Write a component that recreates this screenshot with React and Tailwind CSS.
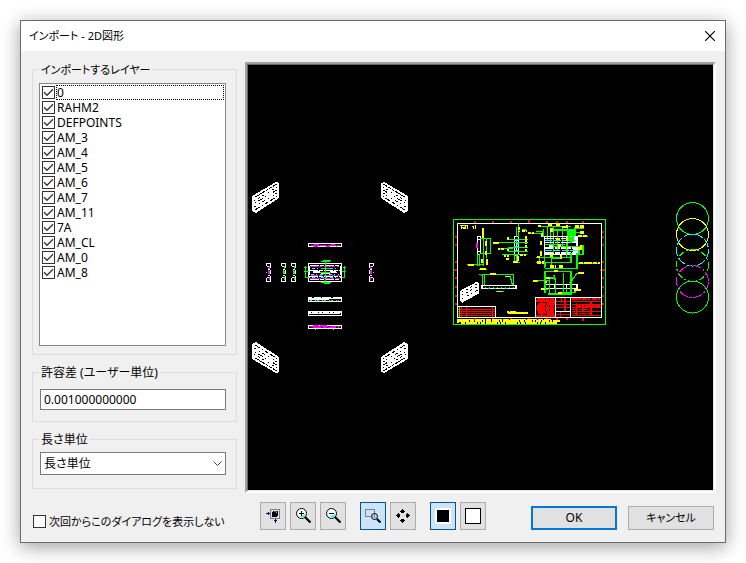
import React from "react";

const LAYERS = [
  "0", "RAHM2", "DEFPOINTS", "AM_3", "AM_4", "AM_5", "AM_6",
  "AM_7", "AM_11", "7A", "AM_CL", "AM_0", "AM_8",
];

const GREEN = "#00ff00";
const YELLOW = "#ffff00";
const CYAN = "#00ffff";
const MAGENTA = "#ff00ff";
const RED = "#ff0000";

function CheckBox({ id, defaultChecked }) {
  return (
    <span className="grid h-[13px] w-[13px] shrink-0">
      <input
        id={id}
        type="checkbox"
        defaultChecked={defaultChecked}
        className="peer col-start-1 row-start-1 h-[13px] w-[13px] appearance-none border border-[#333] bg-white"
      />
      <svg
        viewBox="0 0 13 13"
        className="pointer-events-none col-start-1 row-start-1 h-[13px] w-[13px] opacity-0 peer-checked:opacity-100"
      >
        <path d="M2 6.3 L5 9.3 L11 3.3" fill="none" stroke="#333" strokeWidth="1.3" />
      </svg>
    </span>
  );
}

function Group({ title, className = "", legendClassName = "", children }) {
  return (
    <fieldset className={"min-w-0 border border-[#dcdcdc] px-[6px] " + className}>
      <legend className={"px-[2px] pt-px leading-[14px] " + legendClassName}>{title}</legend>
      {children}
    </fieldset>
  );
}

function ToolButton({ label, active, children }) {
  return (
    <button
      type="button"
      aria-label={label}
      aria-pressed={!!active}
      className={
        "flex h-7 w-[26px] items-center justify-center border " +
        (active ? "border-[#005499] bg-[#cce4f7]" : "border-[#adadad] bg-[#e1e1e1]")
      }
    >
      <svg viewBox="0 0 16 16" className="h-4 w-4 overflow-visible">
        {children}
      </svg>
    </button>
  );
}

function Magnifier({ plus }) {
  return (
    <>
      <circle cx="6.5" cy="5.5" r="5" fill="#fff" stroke="#000" />
      <path d="M5.500 9 L7.500 8 M8 8.500 L10 6.500" stroke={CYAN} strokeWidth="1.6" />
      <path d="M4 5h5v1h-5z" />
      {plus && <path d="M6 3h1v5h-1z" />}
      <path d="M10 9 L15.5 14.5" stroke="#000" strokeWidth="2.2" />
    </>
  );
}

/* Isometric view of the part, slanting up to the right. */
function IsoPart({ transform }) {
  return (
    <g transform={transform}>
      <path d="M0 14 L24 0 L27 1 V16 L4 31 L0 29 Z" fill="#fff" />
      <g stroke="#000" fill="none" shapeRendering="crispEdges">
        <path d="M3 15 L25 2" strokeDasharray="4 1 7 1 2 1" />
        <path d="M2 19 L25 5" strokeDasharray="1 4 2 3 1 5" />
        <path d="M3 21 L25 8" strokeDasharray="1 3 5 2 2 4" />
        <path d="M2 25 L25 11" strokeDasharray="2 4 1 2 4 3" />
        <path d="M3 28 L26 14" strokeDasharray="6 2 1 3 3 2" />
      </g>
    </g>
  );
}

/* Narrow side view of the part, 4 by 19. */
function SidePart({ x, accent, flip }) {
  return (
    <g transform={flip ? `translate(${x + 5} 263) scale(-1 1)` : `translate(${x} 263)`}>
      <path d="M0 .5h5 M4.500 0v5 M4.500 7v4 M4.500 13v6 M0 18.500h5 M.5 0v3 M.5 15v4 M1 3.500h2 M1 14.500h2 M2 6.500h2 M2 12.500h2" stroke="#fff" fill="none" />
      <path d="M3.500 3v3 M2.500 7v4 M3.500 8v3 M3.500 14v3" stroke={accent} />
      {accent === MAGENTA && <path d="M0 9.500h1 M2 5.500h1" stroke={CYAN} />}
    </g>
  );
}

function Views() {
  return (
    <g fill="none" shapeRendering="crispEdges">
      <IsoPart transform="translate(252 182)" />
      <IsoPart transform="translate(408 182) scale(-1 1)" />
      <IsoPart transform="translate(252 373) scale(1 -1)" />
      <IsoPart transform="translate(408 373) scale(-1 -1)" />

      <SidePart x={266} accent={MAGENTA} />
      <SidePart x={281} accent={GREEN} />
      <SidePart x={291} accent={GREEN} />
      <SidePart x={369} accent={MAGENTA} flip />

      <rect x="308.5" y="243.5" width="33" height="3" stroke="#fff" />
      <path d="M311 245.5h29 M314 244.5h5 M331 244.5h4" stroke={MAGENTA} strokeDasharray="5 1 2 1 7 1" />
      <path d="M314 246.5h22" stroke={MAGENTA} strokeDasharray="4 8" />
      <path d="M313 246.5h25" stroke={CYAN} strokeDasharray="1 22" />

      <rect x="308.5" y="263.5" width="33" height="18" stroke="#fff" />
      <path d="M310 265.5h30 M309 270.5h32 M309 276.5h32 M310 279.5h30 M309.500 266v12 M340.500 266v12" stroke="#fff" strokeDasharray="9 1 4 1" />
      <path d="M311 266.5h28 M311 275.5h28 M310 278.5h30" stroke={MAGENTA} strokeDasharray="7 1 3 2" />
      <path d="M312 268.5h26 M311 274.5h28 M312 277.5h26" stroke={CYAN} strokeDasharray="3 2 1 3" />
      <path d="M313 271.5h7 M330 271.5h6 M313 272.5h8 M330 272.5h7 M321 273.5h9" stroke="#fff" />
      <path d="M321 268.5h9 M320 272.5h11 M325.5 261v22 M321 261.5h9 M323 260.5h8 M321 282.5h10 M324 283.5h6" stroke={GREEN} />
      <path d="M305.5 266v12 M304 267.5h3 M304 271.5h5 M305 277.5h4 M344.5 266v12 M343 267.5h3 M342 271.5h4 M342 277.5h3" stroke={GREEN} />

      <path d="M308 297.5h34 M309 298.5h32 M309 299.5h20 M308 301.5h34 M308.5 297v5 M341.5 297v5" stroke="#fff" />
      <path d="M312 297.5h28" stroke="#000" strokeDasharray="2 7 1 9" />
      <path d="M310 300.5h29" stroke={GREEN} strokeDasharray="2 3 1 1" />

      <path d="M308 311.5h34 M309 312.5h32 M309 313.5h31 M308 315.5h34 M308.5 311v5 M341.5 311v5" stroke="#fff" />
      <path d="M311 312.5h28" stroke="#000" strokeDasharray="1 6 1 3" />

      <rect x="308.5" y="325.5" width="33" height="3" stroke="#fff" />
      <path d="M310 326.5h30 M313 325.5h14" stroke={MAGENTA} strokeDasharray="6 1 11 2" />
      <path d="M313 327.5h26" stroke={MAGENTA} strokeDasharray="8 2 4 1" />
      <path d="M315 329.5h20" stroke={CYAN} strokeDasharray="1 17" />
    </g>
  );
}

/* The drawing sheet, on a grid three times finer than the view. */
function Sheet() {
  return (
    <g transform="translate(445 210) scale(0.33333)" fill="none" strokeWidth="3.8" shapeRendering="crispEdges">
      <rect x="25.5" y="28.5" width="456" height="315" stroke={GREEN} strokeWidth="3" />
      <path
        d="M91 32v7 M145 33v6 M199 32v7 M253 30v12 M307 33v6 M337 33v6 M367 32v7 M415 33v6 M91 324v8 M145 324v6 M199 324v8 M253 324v12 M307 324v6 M337 324v8 M367 324v6 M415 324v8 M30 82h8 M31 106h6 M29 156h8 M28 181h12 M31 205h6 M31 232h6 M30 258h8 M31 282h6 M471 66h7 M471 82h7 M471 106h6 M471 156h7 M466 181h14 M471 205h7 M471 232h7 M471 258h7 M471 282h7"
        stroke={RED}
        strokeWidth="5"
      />
      <rect x="37.5" y="40.5" width="432" height="282" stroke="#fff" strokeWidth="3" />

      {/* Title note */}
      <path d="M45 46h24 M48 52h14 M49 49v9 M62 49v9 M68 46v10 M80 49h8 M85 49v9 M91 46v12 M54 55h10" stroke={YELLOW} />

      {/* Left section */}
      <path d="M97 79.500h9 M97 79v54 M97 133h9 M106 79v54 M100 88h6 M100 124h6" stroke="#fff" />
      <path d="M97 98v17 M94 106h6" stroke={MAGENTA} strokeWidth="6" />
      <path d="M115 55v112 M106 85h32 M106 130h32 M136 85v46 M124 85v60 M97 133v34 M103 133v34 M66 164h50 M103 179h24" stroke={GREEN} />
      <path d="M115 53v30 M124 92v16 M124 122v14 M112 148v12 M126 148v16 M68 164h18 M104 177h20" stroke={YELLOW} strokeWidth="6" />

      {/* Middle section */}
      <path d="M208 80h12 M208 80v56 M220 80v56 M208 136h12 M208 90h12 M208 124h12 M214 96v24" stroke="#fff" />
      <path d="M208 92h6v10h8 M206 110h14 M210 122h10" stroke={CYAN} />
      <path d="M190 88h58 M190 97h58 M145 98h60 M160 115h45 M190 124h58 M190 112h58 M170 134h75 M208 133v24 M214 50v30 M220 40v40 M214 133v24 M204 157h20 M232 60h12 M250 70h44v-6h-22" stroke={GREEN} />
      <path d="M190 82v10 M144 98h18 M158 116h18 M190 124v-8 M244 78v24 M244 106v18 M222 52v14 M176 138h16 M184 146h12 M220 138v14 M232 62h14 M250 70h16 M204 156h16 M226 134h18" stroke={YELLOW} strokeWidth="6" strokeDasharray="8 2" />

      {/* Right plan */}
      <path d="M298 133v42 M282 50h96 M296 56v24 M308 50v40 M316 58v48 M325 50v70 M338 62h40 M338 62v60 M352 50v60 M368 50v78 M378 56v34 M390 50v30 M316 60h60 M300 142h80" stroke={GREEN} />
      <rect x="298" y="79" width="98" height="54" stroke="#fff" />
      <path d="M300 86h94 M300 98h94 M300 114h94 M300 129h94" stroke="#fff" strokeWidth="5" strokeDasharray="28 3 14 4" />
      <path d="M312 106h14 M388 80v18 M388 116v16" stroke="#fff" strokeWidth="8" />
      <path d="M300 92h94 M298 122h98" stroke={CYAN} strokeDasharray="22 4" />
      <path
        d="M300 104h60 M326 110h88 M338 62v60 M325 100v30 M378 80v20 M364 100v42 M272 142h110 M272 158h106 M378 130v28 M396 130v34 M396 160h62 M300 175h96v-42 M320 166v-20h30 M402 110v24h12v-28 M390 54h28 M388 68h26 M398 80h32 M284 142v18 M300 158v14 M372 56v34 M384 56v40"
        stroke={GREEN}
      />
      <path
        d="M284 44v8 M308 46h14 M334 44h12 M352 52h14 M366 44v10 M390 50h28 M404 68h14 M400 78h30 M320 54v12 M292 70v14 M334 88h12 M276 142h10 M320 132v10 M348 134v12 M276 158h22 M316 170h16 M342 170h12 M402 160h64 M408 104v10 M398 116h14 M366 80v12 M344 102v10 M288 122v16 M288 92v14"
        stroke={YELLOW}
        strokeWidth="7"
        strokeDasharray="12 2"
      />

      {/* Lower elevation */}
      <path d="M112 194h94 M112 194v32 M118 194v32 M206 194v32 M182 200h14l6 24 M104 192l8 6 M154 245h22" stroke={GREEN} />
      <path d="M134 193h18 M180 200h16 M156 245h16" stroke={YELLOW} strokeWidth="5" />
      <path d="M111 227h102v8h-102z" stroke="#fff" />
      <path d="M120 232h86" stroke={GREEN} strokeDasharray="4 8" />
      <path d="M130 236h62" stroke={CYAN} strokeDasharray="5 12" />

      {/* Right elevation */}
      <path d="M298 223h98v12h-98z M330 223v12 M364 223v12" stroke="#fff" />
      <path d="M300 184h78 M300 184v64 M378 184v64 M314 204v50 M332 204v48 M356 190v64 M300 204h26 M266 212h46 M326 194l6 20 M342 248h48v-12 M308 252h74 M396 190l-22 30 M396 190h22 M288 238h22 M364 235v20" stroke={GREEN} />
      <path d="M326 182h14 M264 212h14 M398 190h20 M304 212v6 M288 238h12 M388 240h20 M340 248h12 M302 204h12" stroke={YELLOW} strokeWidth="6" />

      {/* Isometric view */}
      <path d="M46 242 L94 216 L102 218 V250 L52 278 L46 274 Z" fill="#fff" />
      <path d="M50 247 L96 222 M50 256 L98 230 M52 266 L98 240" stroke="#000" strokeWidth="3" strokeDasharray="4 11 8 7" />

      {/* Revision table */}
      <path d="M40 298h110 M40 304h110 M40 310h110 M40 316h110 M49 292v28 M64 292v28 M142 292v28" stroke={RED} strokeWidth="3" />
      <path d="M40 290h112v32" stroke="#fff" />
      <path d="M43 292v28" stroke={GREEN} />
      <path d="M188 302v8 M188 310h60 M196 306h16 M222 308h26" stroke={YELLOW} strokeWidth="6" />

      {/* Title block */}
      <path d="M276 266h50 M280 282h50 M276 290h52 M276 300h52 M280 308h48 M306 274h24 M306 316h24" stroke={RED} strokeWidth="8" strokeDasharray="24 2 11 2" />
      <path d="M273 274h58 M273 296h58 M273 318h58 M292 264v56 M310 264v56 M324 264v56" stroke={RED} strokeWidth="5" />
      <path d="M334 274h40 M334 284h42 M334 292h42 M334 314h42 M350 264v14 M360 264v40 M346 306v14" stroke={RED} />
      <path d="M380 274h88 M380 284h88 M380 292h88 M380 304h88 M380 316h88 M394 280v38 M414 284v20 M438 276v40" stroke={RED} />
      <path d="M382 267h84 M392 288h74 M382 298h50 M382 310h60" stroke={RED} strokeDasharray="16 3 6 4" />
      <path d="M271 322v-60h198 M332 262v60 M377 262v60 M332 304h45" stroke="#fff" />

      {/* Notes */}
      <path d="M38 329h280" stroke={YELLOW} strokeDasharray="30 2 17 3" />
      <path d="M40 333h306" stroke={YELLOW} strokeWidth="6" strokeDasharray="22 2 7 3 14 2" />
      <path d="M48 339h290" stroke={YELLOW} strokeWidth="5" strokeDasharray="12 3 34 3 6 2" />
      <path d="M39 328v12" stroke={YELLOW} strokeWidth="6" />
    </g>
  );
}

function Circles() {
  return (
    <g fill="none" shapeRendering="crispEdges">
      <circle cx="692.5" cy="218.500" r="16" stroke={GREEN} />
      <circle cx="692.5" cy="265.500" r="16" stroke={GREEN} strokeDasharray="6 2 2 2" />
      <circle cx="692.5" cy="234.500" r="16" stroke={YELLOW} />
      <circle cx="692.5" cy="250" r="16" stroke={CYAN} strokeDasharray="9 2" />
      <circle cx="692.5" cy="281.500" r="16" stroke={MAGENTA} strokeDasharray="9 2 2 2" />
      <circle cx="692.5" cy="297" r="16" stroke={GREEN} />
    </g>
  );
}

export default function App() {
  return (
    <div className="flex min-h-screen bg-white p-5 font-['Noto_Sans','Noto_Sans_CJK_JP',sans-serif] text-[12px] text-black [font-feature-settings:'palt']">
      <div
        role="dialog"
        aria-labelledby="dialog-title"
        className="flex min-w-0 flex-1 flex-col border border-[#6b6b6b] bg-[#f0f0f0] shadow-[0_4px_18px_rgba(0,0,0,0.38)]"
      >
        <header className="flex h-[30px] items-center justify-between bg-white pr-[10px] pl-2">
          <h1 id="dialog-title" className="text-[11px]">インポート - 2D図形</h1>
          <button type="button" aria-label="閉じる">
            <svg viewBox="0 0 10 10" className="h-[10px] w-[10px]">
              <path d="M0 0 L10 10 M10 0 L0 10" stroke="#000" strokeWidth="1.2" />
            </svg>
          </button>
        </header>

        <div className="flex flex-1 flex-col pt-[11px] pr-[9px] pb-3 pl-[11px]">
          <div className="flex flex-1 gap-2">
            <div className="flex w-[205px] shrink-0 flex-col gap-[10px] pb-1">
              <Group title="インポートするレイヤー" className="flex flex-1 flex-col pb-2" legendClassName="text-[11px]">
                <ul className="mt-[6px] mr-1 flex-1 border border-[#828790] bg-white p-[1px] pl-[2px]">
                  {LAYERS.map((name, i) => (
                    <li key={name} className="flex h-[15px] items-center">
                      <CheckBox id={`layer-${name}`} defaultChecked />
                      <label
                        htmlFor={`layer-${name}`}
                        className={
                          "ml-px flex-1 border leading-[13px] " +
                          (i === 0 ? "border-dotted border-black" : "border-transparent")
                        }
                      >
                        {name}
                      </label>
                    </li>
                  ))}
                </ul>
              </Group>

              <Group title="許容差 (ユーザー単位)" className="h-[57px]">
                <input
                  type="text"
                  aria-label="許容差 (ユーザー単位)"
                  defaultValue="0.001000000000"
                  className="mt-[9px] ml-[1px] block h-[21px] w-[186px] border border-[#7a7a7a] bg-white px-[3px]"
                />
              </Group>

              <Group title="長さ単位" className="h-[57px]">
                <div className="mt-[5px] ml-[1px] grid w-[186px] items-center">
                  <select
                    aria-label="長さ単位"
                    className="col-start-1 row-start-1 h-[23px] w-full appearance-none border border-[#7a7a7a] bg-white px-[3px]"
                  >
                    <option>長さ単位</option>
                  </select>
                  <svg viewBox="0 0 9 5" className="pointer-events-none col-start-1 row-start-1 mr-1 h-[5px] w-[9px] justify-self-end">
                    <path d="M.5 .5 L4.500 4.500 L8.500 .5" fill="none" stroke="#444" />
                  </svg>
                </div>
              </Group>
            </div>

            <div className="flex min-w-0 flex-1 border-t-2 border-r-2 border-b-2 border-l-2 border-t-[#a0a0a0] border-r-white border-b-white border-l-[#a0a0a0]">
              <div className="flex min-w-0 flex-1 border border-t-[#696969] border-r-[#e3e3e3] border-b-[#e3e3e3] border-l-[#696969] bg-black">
                <svg viewBox="248 65 465 425" className="h-0 min-h-full w-full" role="img" aria-label="プレビュー">
                  <Views />
                  <Sheet />
                  <Circles />
                </svg>
              </div>
            </div>
          </div>

          <footer className="flex items-end gap-2 pt-[9px]">
            <div className="flex w-[205px] shrink-0 items-center gap-[3px] pl-[1px]">
              <CheckBox id="hide-dialog" />
              <label htmlFor="hide-dialog" className="text-[11px] leading-[17px] whitespace-nowrap">
                次回からこのダイアログを表示しない
              </label>
            </div>

            <div className="flex gap-[14px] pl-[15px]">
              <div className="flex gap-1">
                <ToolButton label="全体表示">
                  <g shapeRendering="crispEdges">
                    <rect x="5.5" y="1.5" width="9" height="9" fill="#e1e1e1" stroke="#808080" />
                    <path d="M8 3h5v5h-1v1h-5v-5h1z" fill="#000" />
                    <path d="M9 3h3v1h-3z" fill="#606060" />
                    <path d="M8 6h2v2h-2z" fill="#000080" />
                    <path d="M11 4h1v1h-1z" fill={CYAN} />
                    <path d="M1 5h4v1h-4z M3 4h1v3h-1z M10 11h1v4h-1z M9 12h3v1h-3z" fill="#000080" />
                  </g>
                </ToolButton>
                <ToolButton label="拡大">
                  <Magnifier plus />
                </ToolButton>
                <ToolButton label="縮小">
                  <Magnifier />
                </ToolButton>
              </div>
              <div className="flex gap-1">
                <ToolButton label="範囲拡大" active>
                  <rect x=".5" y="1.5" width="9" height="7" fill="none" stroke="#808080" />
                  <circle cx="9.500" cy="8.500" r="3" fill="#cce4f7" stroke="#000" />
                  <path d="M9.500 6v3h-3" fill="none" stroke="#808080" />
                  <path d="M9.500 10.500 L11.500 8.500" stroke={CYAN} />
                  <path d="M12 11 L15.500 14.500" stroke="#000" strokeWidth="2.2" />
                </ToolButton>
                <ToolButton label="移動">
                  <g shapeRendering="crispEdges">
                    <path d="M7 1h1v1h1v1h1v1h-1v1h-3v-1h-1v-1h1v-1h1z" />
                    <path d="M7 15h1v-1h1v-1h1v-1h-1v-1h-3v1h-1v1h1v1h1z" />
                    <path d="M1 7h1v-1h1v-1h1v1h1v3h-1v1h-1v-1h-1v-1h-1z" />
                    <path d="M15 7h-1v-1h-1v-1h-1v1h-1v3h1v1h1v-1h1v-1h1z" />
                  </g>
                </ToolButton>
              </div>
              <div className="flex gap-1">
                <ToolButton label="背景を黒" active>
                  <rect width="16" height="16" fill="#fff" />
                  <rect x="2" y="2" width="12" height="12" />
                </ToolButton>
                <ToolButton label="背景を白">
                  <rect x=".5" y=".5" width="15" height="15" fill="#fff" stroke="#000" />
                </ToolButton>
              </div>
            </div>

            <div className="mr-[2px] ml-auto flex gap-[11px]">
              <button type="button" className="h-6 w-[86px] border-2 border-[#0078d7] bg-[#e1e1e1] leading-[18px]">
                OK
              </button>
              <button type="button" className="h-6 w-[86px] border border-[#adadad] bg-[#e1e1e1] text-[11px] leading-[18px]">
                キャンセル
              </button>
            </div>
          </footer>
        </div>
      </div>
    </div>
  );
}
